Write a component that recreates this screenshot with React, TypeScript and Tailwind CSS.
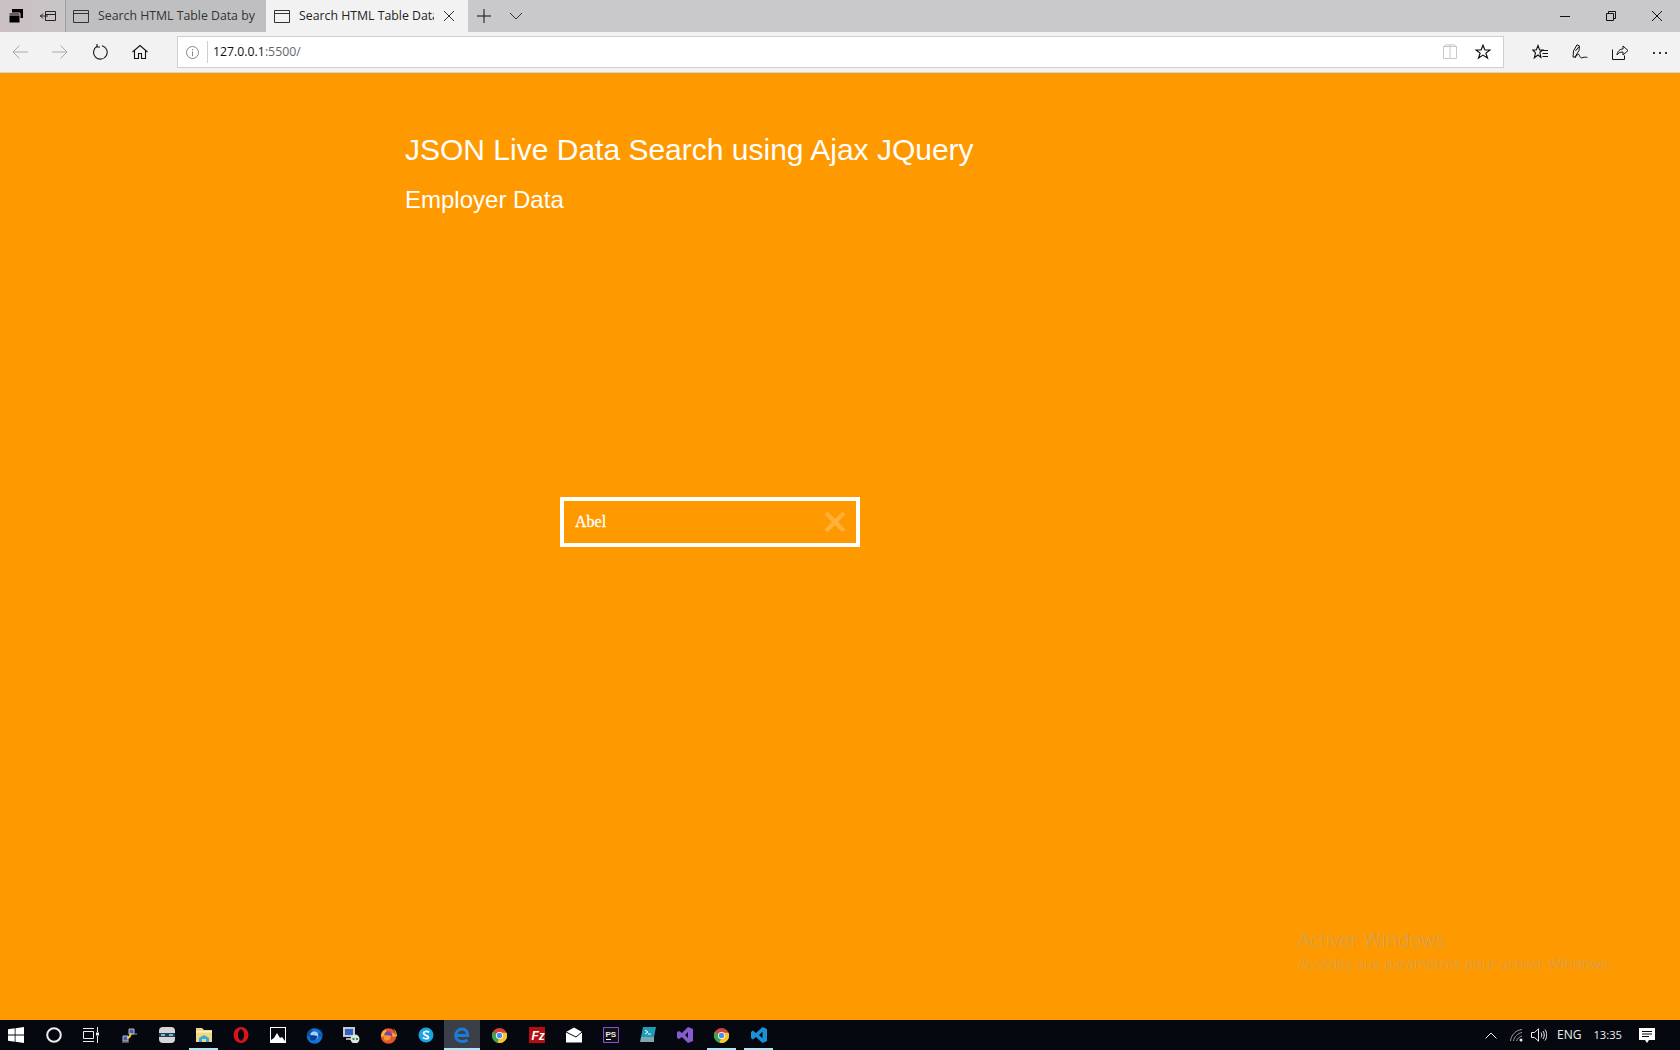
import React from 'react';

const ui = "font-['Open_Sans','Noto_Sans',sans-serif]";

const Line = ({ d, c = '#000', w = 1 }: { d: string; c?: string; w?: number }) => (
  <path d={d} fill="none" stroke={c} strokeWidth={w} />
);

const Ico = ({ size = 16, children }: { size?: number; children: React.ReactNode }) => (
  <svg width={size} height={size} viewBox={`0 0 ${size} ${size}`} className="block shrink-0">
    {children}
  </svg>
);

const TabPage = () => (
  <Ico>
    <path d="M.5 2.5h15v12H.5zM.5 5.5h15" fill="none" stroke="#333" />
  </Ico>
);

// top strip
const TabStrip = () => (
  <div className="h-8 flex bg-[#c9c9cb] text-[12.3px] text-[#333]">
    <div className="w-8 flex items-center justify-center bg-[#c9c1c4]">
      <Ico>
        <path d="M4 1h11v9H4z" fill="#000" />
        <path d="M1 5h11v10H1z" fill="#000" stroke="#c9c1c4" />
        <path d="M1 7h11" stroke="#c9c1c4" />
      </Ico>
    </div>
    <div className="w-8 flex items-center justify-center bg-[#c9c4c6]">
      <Ico>
        <Line d="M5.5 3.5h10v9h-10zM5.5 6.5h10M0 8h8M3 5.5 .5 8 3 10.5" c="#222" />
      </Ico>
    </div>
    <div className="w-[201px] ml-px flex items-center gap-[9px] pl-[7px] bg-[#bfbfc1] border-l border-[#9b9b9d]">
      <TabPage />
      <span>Search HTML Table Data by</span>
    </div>
    <div className="w-[202px] flex items-center gap-[9px] pl-2 bg-[#f2f2f2] text-[#222]">
      <TabPage />
      <span className="w-[135px] overflow-hidden whitespace-nowrap">Search HTML Table Data by</span>
      <Ico size={12}>
        <Line d="M1 1l10 10M11 1 1 11" c="#333" />
      </Ico>
    </div>
    <div className="w-8 flex items-center justify-center">
      <Ico size={14}>
        <Line d="M7 0v14M0 7h14" c="#111" />
      </Ico>
    </div>
    <div className="w-8 flex items-center justify-center">
      <Ico size={14}>
        <Line d="M1 4l6 6 6-6" c="#333" />
      </Ico>
    </div>
    <div className="flex-1" />
    <div className="w-[46px] flex items-center justify-center">
      <Ico size={10}>
        <Line d="M0 5.5h10" c="#111" />
      </Ico>
    </div>
    <div className="w-[46px] flex items-center justify-center">
      <Ico size={10}>
        <Line d="M.5 2.5h7v7h-7zM2.5 2.5v-2h7v7h-2" c="#111" />
      </Ico>
    </div>
    <div className="w-[46px] flex items-center justify-center">
      <Ico size={10}>
        <Line d="M0 0l10 10M10 0 0 10" c="#111" />
      </Ico>
    </div>
  </div>
);

const NavBtn = ({ children }: { children: React.ReactNode }) => (
  <div className="w-10 flex items-center justify-center">{children}</div>
);

const star = 'M8 1.2 9.9 6h5l-4 3.1 1.6 5L8 11.1 3.5 14.100l1.600-5L1.100 6h5z';

const NavBar = () => (
  <div className="h-[41px] flex items-center bg-[#f2f2f2] border-b border-[#d4d4d4]">
    <NavBtn>
      <Ico>
        <Line d="M16 8H1M7.500 1.500 1 8l6.500 6.500" c="#a8a8a8" />
      </Ico>
    </NavBtn>
    <NavBtn>
      <Ico>
        <Line d="M0 8h15M8.500 1.500 15 8l-6.500 6.500" c="#a8a8a8" />
      </Ico>
    </NavBtn>
    <NavBtn>
      <Ico>
        <Line d="M5.200 2.300A6.800 6.800 0 1 0 10 1.700M5 0v3h3" c="#111" w={1.1} />
      </Ico>
    </NavBtn>
    <NavBtn>
      <Ico>
        <Line d="M.5 8 8 1.500 15.500 8M2.500 6.500v8h4v-5h3v5h4v-8" c="#111" w={1.1} />
      </Ico>
    </NavBtn>
    <div className="ml-[17px] w-[1327px] h-8 flex items-center bg-white border border-[#cfcfcf]">
      <div className="w-[30px] h-[22px] flex items-center justify-center border-r border-[#cfcfcf]">
        <Ico size={13}>
          <circle cx="6.500" cy="6.500" r="6" fill="none" stroke="#888" />
          <path d="M6.500 5.500v4.500M6.500 3v1.300" stroke="#888" />
        </Ico>
      </div>
      <div className="pl-[5px] text-[12.3px] text-[#111]">
        127.0.0.1<span className="text-[#666]">:5500/</span>
      </div>
      <div className="flex-1" />
      <Ico>
        <Line d="M1.500 2.500h13v12h-13zM8 2.500v12M1.500 2.500 4 .8h3.500L8 2.500l.500-1.700H12l2.500 1.700" c="#c8c8c8" />
      </Ico>
      <div className="w-[17px]" />
      <Ico>
        <path d={star} fill="none" stroke="#111" strokeWidth="1.200" />
      </Ico>
      <div className="w-3" />
    </div>
    <div className="ml-4 flex">
      <NavBtn>
        <Ico>
          <path d="M6 1.500 7.600 6h3L7.900 8.300l1 5L6 11l-3.700 2.800 1.200-5L.8 6h3.500z" fill="none" stroke="#111" strokeWidth="1.100" />
          <path d="M10 6.500h6M10.500 9.500h5.500M10.500 12.500h5.500" stroke="#111" />
        </Ico>
      </NavBtn>
      <NavBtn>
        <Ico>
          <Line d="M1 13 1.500 7 5 .8l2.500 1.200-.5 4.500L3 13zM3.500 7 7 2.500M3 14c2-4 4-4.500 4.500-2.500s1.500 3 3.500 2c1.500-.500 3-.500 4.500 0" c="#111" />
        </Ico>
      </NavBtn>
      <NavBtn>
        <Ico>
          <Line d="M.5 5.500v10h12v-4M5 11c.500-4 3-6 6-6V2l5 4.500L11 11V8c-3 0-5 1-6 3z" c="#111" />
        </Ico>
      </NavBtn>
      <NavBtn>
        <Ico>
          <path d="M1 8h2v2H1zM7 8h2v2H7zM13 8h2v2h-2z" fill="#333" />
        </Ico>
      </NavBtn>
    </div>
  </div>
);

const TaskItem = ({ className = '', line, children }: { className?: string; line?: boolean; children: React.ReactNode }) => (
  <div className={`relative w-[37px] h-full flex items-center justify-center ${className}`}>
    {children}
    {line && <span className="absolute bottom-0 left-1 right-1 h-[2px] bg-[#aee6f8]" />}
  </div>
);

const Chrome = () => (
  <svg width="15" height="15" viewBox="0 0 16 16">
    <circle cx="8" cy="8" r="8" fill="#d8403a" />
    <path d="M8 8 1 4a8 8 0 0 0 5 11.800z" fill="#3da64a" />
    <path d="M8 8 6 15.800A8 8 0 0 0 15.500 5H8z" fill="#f5c52c" />
    <circle cx="8" cy="8" r="3.800" fill="#fff" />
    <circle cx="8" cy="8" r="2.900" fill="#4a8ee8" />
  </svg>
);

const Firefox = ({ dark }: { dark?: boolean }) => (
  <svg width="17" height="17" viewBox="0 0 16 16">
    <circle cx="8" cy="8.500" r="7.300" fill={dark ? '#1273d8' : '#e8552b'} />
    <path d="M1 9c0-4 2-6 5-7-1 2 0 3 2 3 3 0 6 1 7 4 0-3-1-6-3-8 3 2 4 5 4 8" fill={dark ? '#0b4fa8' : '#f7b52f'} />
    <circle cx="7.800" cy="8" r="3.800" fill={dark ? '#9fd2f7' : '#7f3fb0'} />
    <path d="M3.500 7.500c2 .500 5-.500 7.500 1.500-1 3-4 5-7 3z" fill={dark ? '#0c3f95' : '#f59a23'} />
  </svg>
);

const Taskbar = () => (
  <div className="h-[30px] flex items-center bg-[#05080f] text-[12px] text-[#eee]">
    <TaskItem className="pr-[5px]">
      <svg width="16" height="16" viewBox="0 0 16 16">
        <path d="M0 2.300 6.700 1.300v6.300H0zM7.500 1.200 16 0v7.600H7.500zM0 8.400h6.700v6.300L0 13.700zM7.500 8.400H16V16l-8.500-1.200z" fill="#fff" />
      </svg>
    </TaskItem>
    <TaskItem className="pr-[4px]">
      <svg width="16" height="16" viewBox="0 0 16 16">
        <circle cx="8" cy="8" r="6.800" fill="none" stroke="#eee" strokeWidth="2" />
      </svg>
    </TaskItem>
    <TaskItem className="pr-[4px]">
      <svg width="16" height="16" viewBox="0 0 16 16">
        <path d="M.5 4.500h10v7H.5zM0 1.500h11M0 14.500h11M14.500 0v5M14.500 9v7" fill="none" stroke="#eee" />
        <path d="M13 5.500h3v3h-3z" fill="#eee" />
      </svg>
    </TaskItem>
    <TaskItem>
      <svg width="15" height="15" viewBox="0 0 15 15">
        <path d="M7 1h5v5H7z" fill="#3b5cc4" stroke="#bbb" />
        <path d="M1 8h5v5H1z" fill="#3b5cc4" stroke="#bbb" />
        <path d="M5 10c3 0 3-2 4-5" fill="none" stroke="#f2c530" strokeWidth="2" />
        <path d="M0 14h7M9 6h6" stroke="#999" />
      </svg>
    </TaskItem>
    <TaskItem>
      <svg width="16" height="16" viewBox="0 0 16 16">
        <rect y="0" width="16" height="16" rx="4" fill="#d6d6d6" />
        <path d="M0 6h16v4H0z" fill="#2c3b4a" />
        <path d="M2 7h4v2H2zM10 7h4v2h-4z" fill="#5cc0e8" />
      </svg>
    </TaskItem>
    <TaskItem line>
      <svg width="16" height="16" viewBox="0 0 16 16">
        <path d="M0 1h6l2 2h8v12H0z" fill="#f3d77f" />
        <path d="M0 4h16v1.500H0z" fill="#fbf0c8" />
        <path d="M3 15v-4l5-3 5 3v4H10v-3H6v3z" fill="#35a9e0" />
      </svg>
    </TaskItem>
    <TaskItem>
      <svg width="16" height="16" viewBox="0 0 16 16">
        <ellipse cx="8" cy="8" rx="7.500" ry="8" fill="#d8141f" />
        <ellipse cx="8" cy="8" rx="3" ry="5.800" fill="#05080f" />
      </svg>
    </TaskItem>
    <TaskItem>
      <svg width="16" height="16" viewBox="0 0 16 16">
        <path d="M0 0h16v16H0z" fill="#fff" />
        <path d="M1 1h14v13l-3-4-2 1-3-5-3 5-3 2z" fill="#05080f" />
      </svg>
    </TaskItem>
    <TaskItem>
      <Firefox dark />
    </TaskItem>
    <TaskItem>
      <svg width="17" height="16" viewBox="0 0 17 16">
        <path d="M0 0h12v10H0z" fill="#c8c8c8" />
        <path d="M2 2h8v6H2z" fill="#2f62c8" />
        <path d="M3 11h6v2H3z" fill="#aaa" />
        <circle cx="12" cy="12" r="4.500" fill="#e2e2e2" />
        <path d="M9.500 11h2v2h-2zM13 11h2v2h-2z" fill="#2a9a46" />
      </svg>
    </TaskItem>
    <TaskItem>
      <Firefox />
    </TaskItem>
    <TaskItem>
      <svg width="16" height="16" viewBox="0 0 16 16">
        <circle cx="8" cy="8" r="7.500" fill="#17a5e3" />
        <path d="M11 5.500C10 4 6 4 5.500 6c-.500 2.500 5 2 5 4.200 0 1.800-4 2-5.500.300" fill="none" stroke="#fff" strokeWidth="1.800" />
      </svg>
    </TaskItem>
    {/* edge, open and focused */}
    <div className="relative w-9 mr-px h-full flex items-center justify-center bg-[#3b4048]">
      <svg width="16" height="16" viewBox="0 0 16 16">
        <path d="M2.500 8.500h11.200c0-4-2.200-6.500-5.700-6.500S1.700 5 1.700 8.500 4.500 14.500 8.500 14.500c2 0 3.500-.500 5-1.500" fill="none" stroke="#1a7bd8" strokeWidth="3" />
      </svg>
      <span className="absolute bottom-0 left-0 right-0 h-[2px] bg-[#aee6f8]" />
    </div>
    <TaskItem>
      <Chrome />
    </TaskItem>
    <TaskItem>
      <svg width="16" height="16" viewBox="0 0 16 16">
        <path d="M0 0h16v16H0z" fill="#b30f10" />
        <text x="2.500" y="13" fontSize="12" fontStyle="italic" fontWeight="700" fill="#fff" fontFamily="Liberation Sans">Fz</text>
      </svg>
    </TaskItem>
    <TaskItem>
      <svg width="16" height="16" viewBox="0 0 16 16">
        <path d="M0 5 8 .5 16 5v10.500H0z" fill="#fff" />
        <path d="M0 5l10 5 6-5" fill="none" stroke="#05080f" />
      </svg>
    </TaskItem>
    <TaskItem>
      <svg width="16" height="16" viewBox="0 0 16 16">
        <path d="M.5.500h15v15H.5z" fill="#111" stroke="#8a4fe0" />
        <text x="2.500" y="9.500" fontSize="8" fontWeight="700" fill="#eee" fontFamily="Liberation Sans">PS</text>
        <path d="M3 12.500h5" stroke="#fff" />
      </svg>
    </TaskItem>
    <TaskItem>
      <svg width="16" height="16" viewBox="0 0 16 16">
        <path d="M3 0h13l-2 10H1z" fill="#1e9bb8" />
        <path d="M1 10h13v5H0z" fill="#7fa8ae" />
        <path d="M5 3l3 2-3 2M8 7h3" fill="none" stroke="#fff" />
      </svg>
    </TaskItem>
    <TaskItem>
      <svg width="16" height="16" viewBox="0 0 16 16">
        <path d="M11 0 16 2v12l-5 2-6-6-3 2-2-1V5l2-1 3 2zM11 5 8 8l3 3z" fill="#8a5ad0" fillRule="evenodd" />
      </svg>
    </TaskItem>
    <TaskItem line>
      <Chrome />
    </TaskItem>
    <TaskItem line>
      <svg width="16" height="16" viewBox="0 0 16 16">
        <path d="M11.500 0 16 2v12l-4.500 2-6.500-6-3 2.500L0 11V5l2-1.500L5 6zM11.500 4.800 8 8l3.500 3.200z" fill="#1b8fd8" fillRule="evenodd" />
      </svg>
    </TaskItem>
    <div className="flex-1" />
    <svg width="12" height="7" viewBox="0 0 12 7">
      <path d="M.5 6.500 6 1l5.500 5.500" fill="none" stroke="#eee" />
    </svg>
    <svg width="13" height="13" viewBox="0 0 13 13" className="ml-[13px]">
      <path d="M.5 12C1 6 6 1 12 .5M3.500 12C4 8 8 4 12 3.500M6.500 12c.500-2 3-4.500 5.500-5" fill="none" stroke="#9a9a9a" />
      <circle cx="11" cy="11" r="1.500" fill="#eee" />
    </svg>
    <svg width="16" height="14" viewBox="0 0 16 14" className="ml-2">
      <path d="M.5 4.500h3L7.500.8v12.400l-4-3.700h-3zM10 4.500c1 1.500 1 3.500 0 5M12 3c1.700 2.500 1.700 5.500 0 8M14 1.500c2.300 3.500 2.300 7.500 0 11" fill="none" stroke="#eee" />
    </svg>
    <span className={`ml-[10px] ${ui}`}>ENG</span>
    <span className={`ml-3 text-[11.2px] ${ui}`}>13:35</span>
    <svg width="16" height="15" viewBox="0 0 16 15" className="ml-[17px] mr-[25px]">
      <path d="M0 0h16v12H10l-2 3-2-3H0z" fill="#fff" />
      <path d="M3 3.500h10M3 6h10M3 8.500h7" stroke="#05080f" />
    </svg>
  </div>
);

export default function App() {
  return (
    <div className="h-screen flex flex-col overflow-hidden bg-[#ff9900] relative">
      <div className={ui}>
        <TabStrip />
        <NavBar />
      </div>

      <main className="flex-1 pl-[405px] text-white font-['Liberation_Sans',Arial,sans-serif]">
        <h1 className="mt-[60px] text-[30px] leading-[34px]">JSON Live Data Search using Ajax JQuery</h1>
        <h2 className="mt-[19px] text-[24px] leading-[28px]">Employer Data</h2>
        <div className="ml-[155px] mt-[283px] w-[300px] h-[50px] flex items-center border-4 border-white pl-[11px] pr-[10px]">
          <input
            readOnly
            value="Abel"
            className="flex-1 min-w-0 bg-transparent outline-none text-white text-[16px] [-webkit-text-stroke:0.3px_white] font-['Liberation_Serif','Times_New_Roman',serif]"
          />
          <svg width="22" height="22" viewBox="0 0 22 22">
            <path d="M2 2l18 18M20 2 2 20" fill="none" stroke="#ffb13c" strokeWidth="4" />
          </svg>
        </div>
      </main>

      {/* activation watermark */}
      <div className="absolute left-[1298px] top-[926px] text-[#c9a264] font-['Open_Sans','Noto_Sans',sans-serif] font-light pointer-events-none">
        <div className="text-[20px] leading-[27px]">Activer Windows</div>
        <div className="text-[14.75px] leading-[20px]">Accédez aux paramètres pour activer Windows.</div>
      </div>

      <Taskbar />
    </div>
  );
}
